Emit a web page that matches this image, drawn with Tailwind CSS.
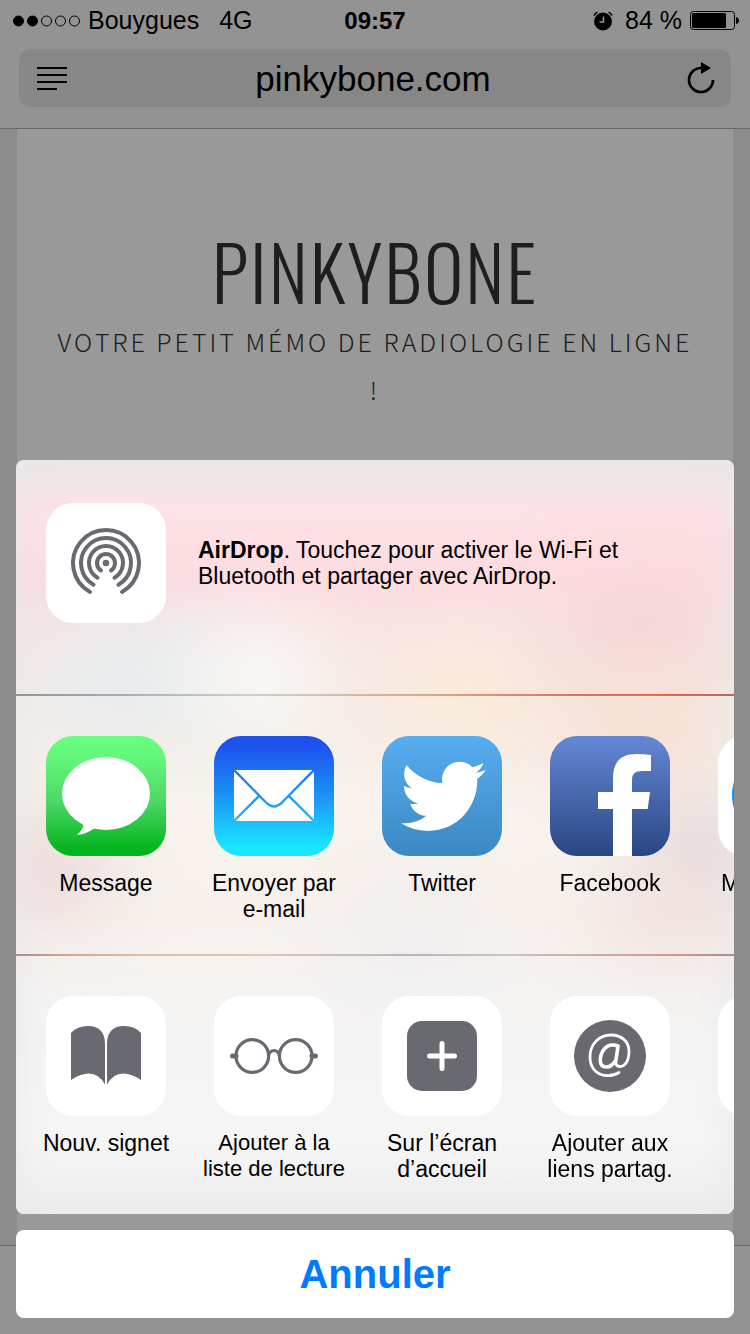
<!DOCTYPE html>
<html lang="fr">
<head>
  <meta charset="UTF-8" />
  <meta name="viewport" content="width=device-width, initial-scale=1.0"/>
  <title>pinkybone.com</title>
  <script src="https://cdn.jsdelivr.net/npm/@tailwindcss/browser@4"></script>
</head>
<body class="min-h-screen flex flex-col bg-[#e9e9e9] text-black font-['Liberation_Sans',Arial,sans-serif]">

<!-- Browser header -->
<header class="bg-[#f6f6f6] border-b border-[#b0b0b0] px-[19px] pb-[21px]">
  <div class="-mx-1.5 h-[41px] grid grid-cols-[1fr_auto_1fr] items-center text-[25px] leading-none">
    <div class="flex items-center">
      <svg class="w-[67px] h-3 mr-2" viewBox="0 0 67 12" fill="none" stroke="#000">
        <circle cx="5.5" cy="6" r="5" fill="#000"/><circle cx="19.5" cy="6" r="5" fill="#000"/>
        <circle cx="33.5" cy="6" r="5"/><circle cx="47.5" cy="6" r="5"/><circle cx="61.5" cy="6" r="5"/>
      </svg>
      <span>Bouygues</span>
      <span class="ml-5">4G</span>
    </div>
    <time class="font-bold text-2xl leading-none">09:57</time>
    <div class="-mr-0.5 flex items-center justify-end">
      <svg class="w-5 h-5 mr-3" viewBox="0 0 20 20" fill="none">
        <circle cx="10" cy="10.500" r="9" fill="#000"/>
        <path d="M1 4.500Q2 2 4.500 1.200M19 4.500Q18 2 15.500 1.200" stroke="#000" stroke-width="1.600"/>
        <path d="M10.500 5.500V11H6.500" stroke="#f6f6f6" stroke-width="1.500"/>
      </svg>
      <span>84 %</span>
      <svg class="w-[49px] h-5 ml-2" viewBox="0 0 49 20">
        <rect x=".5" y=".5" width="44" height="18" rx="3" fill="none" stroke="#000"/>
        <rect x="2" y="2" width="34" height="15" rx="1.500"/>
        <path d="M46 6Q49 7 49 9.500T46 13Z"/>
      </svg>
    </div>
  </div>
  <div class="mt-2 h-[58px] rounded-xl bg-[#e2e2e2] flex items-center justify-between pl-[18px] pr-4">
    <button type="button" aria-label="Lecteur">
      <svg class="w-[30px] h-6" viewBox="0 0 30 24" stroke="#000" stroke-width="2"><path d="M0 2H30M0 9H30M0 16H30M0 23H20"/></svg>
    </button>
    <a href="#" class="text-[35px] leading-none">pinkybone.com</a>
    <button type="button" aria-label="Actualiser" class="w-9 flex justify-end">
      <svg class="w-7 h-8" viewBox="0 0 28 32" fill="none">
        <path d="M26 18A12 12 0 1 1 14 6" stroke="#000" stroke-width="2.700"/>
        <path d="M14 0L24 6L14 12Z" fill="#000"/>
      </svg>
    </button>
  </div>
</header>

<!-- Page -->
<main class="flex-1 mx-[17px] bg-white px-9 pt-24 text-center text-[#333]">
  <h1 class="font-['Oswald','Open_Sans_Condensed','Roboto_Condensed','Liberation_Sans_Narrow',sans-serif] font-light text-[75px] leading-[92px] tracking-[2px]">PINKYBONE</h1>
  <p class="font-['Noto_Sans_CJK_SC',sans-serif] font-light text-[25px] leading-[48px] tracking-[3px]">VOTRE PETIT MÉMO DE RADIOLOGIE EN LIGNE !</p>
</main>
<footer class="h-[89px] bg-[#f6f6f6] border-t border-[#b0b0b0]"></footer>

<!-- Share sheet -->
<div class="fixed inset-0 bg-black/40 flex flex-col justify-end gap-4 p-4">
  <div role="dialog" aria-label="Partager" class="relative isolate overflow-hidden rounded-lg bg-linear-[180deg,#ece6e6_0%,#fde1e5_7%,#fddce1_16%,#f7e5e3_24%,#f5ece6_33%,#f8f3ed_45%,#f7f1ec_60%,#f4f3f2_70%,#f5f5f5_90%,#eeeeee_100%]">
    <!-- soft colours behind the sheet -->
    <div class="absolute inset-0 -z-10">
      <div class="absolute left-[2%] top-[22%] w-[30%] h-[14%] rounded-full bg-[#e5ecef] blur-2xl"></div>
      <div class="absolute left-[24%] top-[22%] w-[20%] h-[13%] rounded-full bg-[#f9f9f6] blur-2xl"></div>
      <div class="absolute left-[50%] top-[24%] w-[26%] h-[14%] rounded-full bg-[#faeada] blur-2xl"></div>
      <div class="absolute left-[76%] top-[17%] w-[22%] h-[12%] rounded-full bg-[#f5d4d2] blur-2xl"></div>
      <div class="absolute left-[76%] top-[29%] w-[22%] h-[14%] rounded-full bg-[#f9dfd2] blur-2xl"></div>
      <div class="absolute -left-[5%] top-[48%] w-[18%] h-[12%] rounded-full bg-[#e9d4d6] blur-2xl"></div>
      <div class="absolute left-[88%] top-[45%] w-[16%] h-[14%] rounded-full bg-[#e2d3d6] blur-2xl"></div>
      <div class="absolute left-[48%] top-[57%] w-[14%] h-[10%] rounded-full bg-[#ecebee] blur-2xl"></div>
      <div class="absolute left-[80%] top-[57%] w-[20%] h-[8%] rounded-full bg-[#f1dedb] blur-2xl"></div>
      <div class="absolute inset-0 shadow-[inset_0_0_40px_#e8e8e8]"></div>
    </div>

    <button type="button" class="w-full flex items-center gap-8 pl-[30px] pr-8 pt-[43px] pb-[71px] text-left">
      <svg class="size-[120px] shrink-0 rounded-[27px] bg-white" viewBox="0 0 120 120" fill="none" stroke="#696971" stroke-width="4" stroke-linecap="round">
        <circle cx="60" cy="60" r="3.300" fill="#696971" stroke="none"/>
        <path d="M55 67.500A9 9 0 1 1 65 67.500M51.500 74.700A17 17 0 1 1 68.500 74.700M47.500 81.700A25 25 0 1 1 72.500 81.700M44 88.900A33 33 0 1 1 76 88.900"/>
      </svg>
      <span class="text-[23px] leading-[26px]"><b>AirDrop</b>. Touchez pour activer le Wi-Fi et<br>Bluetooth et partager avec AirDrop.</span>
    </button>

    <div class="h-0.5 bg-linear-[90deg,#8f9496_0%,#a3b0b8_15%,#d0cdc6_32%,#cfc3b4_42%,#dfa276_60%,#cd7c60_77%,#d6704e_90%,#b06c60_100%]"></div>

    <ul class="flex overflow-hidden pl-1.5 pt-10 pb-8 text-[23px] leading-[26px] text-center">
      <li class="w-[168px] shrink-0">
        <button type="button" class="w-full flex flex-col items-center gap-3.5">
          <svg class="size-[120px] rounded-[27px] bg-linear-[180deg,#68ff80_0%,#63f57a_20%,#4bd765_55%,#04b41e_95%]" viewBox="0 0 120 120" fill="#fff">
            <ellipse cx="60" cy="57.500" rx="44" ry="36.500"/>
            <path d="M34 84Q39 89 36 93Q34 97 31 98.500Q38 99.500 48 92.500L50 84Z"/>
          </svg>
          Message
        </button>
      </li>
      <li class="w-[168px] shrink-0">
        <button type="button" class="w-full flex flex-col items-center gap-3.5">
          <svg class="size-[120px] rounded-[27px]" viewBox="0 0 120 120">
            <defs>
              <linearGradient id="mail" gradientUnits="userSpaceOnUse" x1="0" y1="0" x2="0" y2="120">
                <stop offset=".08" stop-color="#1e51ee"/><stop offset=".5" stop-color="#1b93f8"/><stop offset=".92" stop-color="#1ae5ff"/>
              </linearGradient>
            </defs>
            <path d="M0 0H120V120H0Z" fill="url(#mail)"/>
            <path d="M20 34H100V85H20Z" fill="#fff"/>
            <path d="M20 34L52 66.500Q60 74.500 68 66.500L100 34M20 85L45 60M100 85L75 60" fill="none" stroke="url(#mail)" stroke-width="2.400"/>
          </svg>
          <span>Envoyer par<br>e-mail</span>
        </button>
      </li>
      <li class="w-[168px] shrink-0">
        <button type="button" class="w-full flex flex-col items-center gap-3.5">
          <svg class="size-[120px] rounded-[27px] bg-linear-[180deg,#57adf0,#3b88c3]" viewBox="0 0 120 120" fill="#fff">
            <path transform="translate(18.700 17.700) scale(3.550)" d="M23.953 4.570a10 10 0 0 1-2.825.775 4.958 4.958 0 0 0 2.163-2.723c-.951.555-2.005.959-3.127 1.184a4.920 4.920 0 0 0-8.384 4.482C7.690 8.095 4.067 6.130 1.640 3.162a4.822 4.822 0 0 0-.666 2.475c0 1.710.870 3.213 2.188 4.096a4.904 4.904 0 0 1-2.228-.616v.060a4.923 4.923 0 0 0 3.946 4.827 4.996 4.996 0 0 1-2.212.085 4.936 4.936 0 0 0 4.604 3.417 9.867 9.867 0 0 1-6.102 2.105c-.390 0-.779-.023-1.170-.067a13.995 13.995 0 0 0 7.557 2.209c9.053 0 13.998-7.496 13.998-13.985 0-.210 0-.420-.015-.630A9.935 9.935 0 0 0 24 4.590z"/>
          </svg>
          Twitter
        </button>
      </li>
      <li class="w-[168px] shrink-0">
        <button type="button" class="w-full flex flex-col items-center gap-3.5">
          <svg class="size-[120px] rounded-[27px] bg-linear-[180deg,#6488d6,#2b4681]" viewBox="0 0 120 120" fill="#fff">
            <path d="M63 120V73H48V56H63V42C63 25 72 18 86 18Q94 18 101 19V35H92C85 35 82 38 82 44V56H100L97.700 73H82V120Z"/>
          </svg>
          Facebook
        </button>
      </li>
      <li class="w-[168px] shrink-0">
        <button type="button" class="w-full flex flex-col items-center gap-3.5">
          <svg class="size-[120px] rounded-[27px] bg-white" viewBox="0 0 120 120"><circle cx="60" cy="59" r="46" fill="#0a94fb"/></svg>
          Messenger
        </button>
      </li>
    </ul>

    <div class="h-0.5 bg-linear-[90deg,#a88f8c_0%,#d3a994_8%,#dcc0a8_18%,#dcc6b4_35%,#bdb4bf_55%,#cdc2bc_68%,#cb9a8e_92%,#a98f8b_100%]"></div>

    <ul class="flex overflow-hidden pl-1.5 pt-10 pb-8 text-[23px] leading-[26px] text-center">
      <li class="w-[168px] shrink-0">
        <button type="button" class="w-full flex flex-col items-center gap-3.5">
          <svg class="size-[120px] rounded-[27px] bg-white" viewBox="0 0 120 120" fill="#696971">
            <path d="M25 37Q31 30 42 30C54 30 59 37 59 48V88.500Q53 77.500 43 77.500Q34 77.500 25 84Z"/>
            <path d="M95 37Q89 30 78 30C66 30 61 37 61 48V88.500Q67 77.500 77 77.500Q86 77.500 95 84Z"/>
          </svg>
          Nouv. signet
        </button>
      </li>
      <li class="w-[168px] shrink-0">
        <button type="button" class="w-full flex flex-col items-center gap-3.5">
          <svg class="size-[120px] rounded-[27px] bg-white" viewBox="0 0 120 120" fill="none" stroke="#696971" stroke-width="3.200">
            <circle cx="38.300" cy="60" r="16.300"/><circle cx="81.700" cy="60" r="16.300"/>
            <path d="M54.500 59.500Q56 54.500 60 54.500T65.500 59.500"/>
            <path d="M18.500 60H22M98 60H101.500" stroke-width="5" stroke-linecap="round"/>
          </svg>
          <span class="text-[22px]">Ajouter à la<br>liste de lecture</span>
        </button>
      </li>
      <li class="w-[168px] shrink-0">
        <button type="button" class="w-full flex flex-col items-center gap-3.5">
          <svg class="size-[120px] rounded-[27px] bg-white" viewBox="0 0 120 120">
            <rect x="25" y="25" width="70" height="70" rx="15" fill="#696971"/>
            <path d="M60 47.500V72.500M47.500 60H72.500" stroke="#fff" stroke-width="5" stroke-linecap="round"/>
          </svg>
          <span>Sur l’écran<br>d’accueil</span>
        </button>
      </li>
      <li class="w-[168px] shrink-0">
        <button type="button" class="w-full flex flex-col items-center gap-3.5">
          <svg class="size-[120px] rounded-[27px] bg-white" viewBox="0 0 120 120" fill="none" stroke="#fff" stroke-linecap="round" stroke-linejoin="round">
            <circle cx="60" cy="60" r="36" fill="#696971" stroke="none"/>
            <path d="M69 76.500C65 79 62 79.700 58 79.700C46 79.700 40 71 40 61C40 48 49 39 61 39C72 39 79 46 79 55C79 65 75 70.500 70 70.500C66 70.500 65.500 67.500 66 64" stroke-width="2.800"/>
            <path d="M68 50L66 64C63 69 60 71 56.500 71C52.500 71 50.300 68.500 50.300 64.500C50.300 56 55.500 49 62.500 49Q65.500 49 68 50Z" stroke-width="3.600"/>
          </svg>
          <span>Ajouter aux<br>liens partag.</span>
        </button>
      </li>
      <li class="w-[168px] shrink-0">
        <button type="button" aria-label="Copier" class="w-full flex flex-col items-center">
          <svg class="size-[120px] rounded-[27px] bg-white" viewBox="0 0 120 120"></svg>
        </button>
      </li>
    </ul>
  </div>

  <button type="button" class="h-[88px] shrink-0 rounded-lg bg-white text-[#007aff] text-[40px] font-bold">Annuler</button>
</div>

</body>
</html>
